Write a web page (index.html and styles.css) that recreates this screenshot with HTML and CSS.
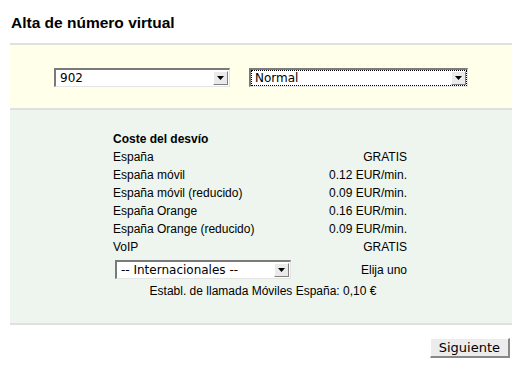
FILE: index.html
```html
<!DOCTYPE html>
<html lang="es">
<head>
  <meta charset="UTF-8">
  <title>Alta de número virtual</title>
  <link rel="stylesheet" href="styles.css">
</head>
<body>

  <h1 class="page-title">Alta de número virtual</h1>

  <form class="alta-form">
    <div class="choose-box">
      <span class="combo combo-prefix">
        <select><option>902</option></select>
        <span class="combo-btn"><svg width="7" height="4" viewBox="0 0 7 4"><path d="M0 0h7L3.5 4z" fill="#000"/></svg></span>
      </span>
      <span class="combo combo-type focused">
        <select><option>Normal</option></select>
        <span class="combo-btn"><svg width="7" height="4" viewBox="0 0 7 4"><path d="M0 0h7L3.5 4z" fill="#000"/></svg></span>
      </span>
    </div>

    <div class="cost-box">
      <table class="cost-table">
        <tr><th colspan="2">Coste del desvío</th></tr>
        <tr><td>España</td><td class="price">GRATIS</td></tr>
        <tr><td>España móvil</td><td class="price">0.12 EUR/min.</td></tr>
        <tr><td>España móvil (reducido)</td><td class="price">0.09 EUR/min.</td></tr>
        <tr><td>España Orange</td><td class="price">0.16 EUR/min.</td></tr>
        <tr><td>España Orange (reducido)</td><td class="price">0.09 EUR/min.</td></tr>
        <tr><td>VoIP</td><td class="price">GRATIS</td></tr>
        <tr class="intl-row">
          <td>
            <span class="combo combo-intl">
              <select><option>-- Internacionales --</option></select>
              <span class="combo-btn"><svg width="7" height="4" viewBox="0 0 7 4"><path d="M0 0h7L3.5 4z" fill="#000"/></svg></span>
            </span>
          </td>
          <td class="price">Elija uno</td>
        </tr>
        <tr><td colspan="2" class="note">Establ. de llamada Móviles España: 0,10 €</td></tr>
      </table>
    </div>

    <div class="actions">
      <button type="button" class="next-btn">Siguiente</button>
    </div>
  </form>

</body>
</html>
```

FILE: styles.css
```css
* {
  box-sizing: border-box;
}

body {
  margin: 0;
  padding: 0 7px 0 10px;
  font-family: "Liberation Sans", Arial, sans-serif;
  font-size: 12px;
  color: #000;
  background: #fff;
}

.page-title {
  font-size: 15.5px;
  font-weight: bold;
  margin: 0;
  padding: 14px 0 0 1px;
  height: 43px;
}

.choose-box {
  background: #ffffea;
  border-top: 2px solid #e0e0e0;
  border-bottom: 2px solid #e0e0e0;
  height: 67px;
  display: flex;
  gap: 19px;
  padding: 23px 0 0 44px;
}

.combo {
  position: relative;
  display: inline-block;
  height: 19px;
  background: #fff;
  border-top: 2px solid #7a7a7a;
  border-left: 2px solid #7a7a7a;
  border-bottom: 1px solid #e4e4e4;
  border-right: 1px solid #e4e4e4;
}

.combo select {
  appearance: none;
  -webkit-appearance: none;
  border: 0;
  outline: 0;
  background: transparent;
  width: 100%;
  height: 100%;
  padding: 0 0 0 4px;
  margin: 0;
  font-family: "DejaVu Sans", sans-serif;
  font-size: 12px;
  color: #000;
}

.combo-btn {
  position: absolute;
  top: 1px;
  right: 1px;
  bottom: 1px;
  width: 15px;
  background: #eaeaea;
  border-top: 1px solid #fff;
  border-left: 1px solid #fff;
  border-right: 1px solid #808080;
  border-bottom: 1px solid #808080;
  display: flex;
  align-items: center;
  justify-content: center;
  pointer-events: none;
}

.combo-prefix { width: 176px; }
.combo-type { width: 219px; }
.combo-intl { width: 176px; }

.combo.focused select {
  outline: 1px dotted #000;
  outline-offset: -1px;
}

.cost-box {
  background: #edf5ee;
  border-bottom: 2px solid #e0e0e0;
  height: 215px;
  padding-top: 20px;
}

.cost-table {
  width: 296px;
  margin: 0 auto;
  border-collapse: collapse;
}

.cost-table th {
  text-align: left;
  font-weight: bold;
  height: 18px;
  padding: 0;
}

.cost-table td {
  height: 18px;
  padding: 0;
  white-space: nowrap;
}

.cost-table .price {
  text-align: right;
  padding-right: 2px;
}

.intl-row td {
  height: 25px;
  padding-top: 2px;
}

.intl-row .combo {
  margin-left: 2px;
}

.cost-table .note {
  text-align: center;
  height: 20px;
  padding-left: 4px;
}

.actions {
  display: flex;
  justify-content: flex-end;
  padding: 13px 2px 0 0;
}

.next-btn {
  font-family: "DejaVu Sans", sans-serif;
  font-size: 13px;
  height: 20px;
  padding: 0 8px;
  background: #ececec;
  border-top: 1px solid #fff;
  border-left: 1px solid #fff;
  border-right: 2px solid #888;
  border-bottom: 2px solid #888;
  color: #000;
}
```
